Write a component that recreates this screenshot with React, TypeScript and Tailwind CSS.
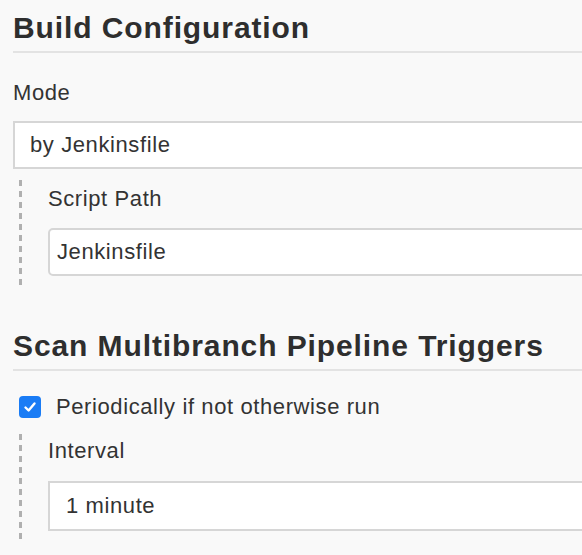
import React from 'react';

const dashBg =
  'bg-[repeating-linear-gradient(to_bottom,#b0b0b0_0px,#b0b0b0_6px,transparent_6px,transparent_11px)]';

const SectionTitle: React.FC<{ children: React.ReactNode }> = ({ children }) => (
  <h2 className="text-[30px] leading-[34px] font-bold tracking-[0.9px] text-[#2e2e2e] pb-[6px] border-b-2 border-[#e3e3e3]">
    {children}
  </h2>
);

const Label: React.FC<{ children: React.ReactNode }> = ({ children }) => (
  <div className="text-[22px] leading-[24px] tracking-[0.6px] text-[#333]">{children}</div>
);

// fake select / text box, runs past the right edge of the window
const Field: React.FC<{ value: string; rounded?: boolean; pad?: string; h?: string }> = ({
  value,
  rounded,
  pad = 'pl-[15px]',
  h = 'h-[48px]',
}) => (
  <div
    className={`${h} ${pad} -mr-[20px] flex items-center bg-white border-2 border-[#d6d6d6] text-[22px] leading-[24px] tracking-[0.6px] text-[#333] ${
      rounded ? 'rounded-[5px]' : ''
    }`}
  >
    {value}
  </div>
);

const Nested: React.FC<{ children: React.ReactNode; className?: string }> = ({ children, className }) => (
  <div className={`flex ${className ?? ''}`}>
    <div className={`ml-[6px] w-[3px] shrink-0 ${dashBg}`} />
    <div className="ml-[26px] flex-1 min-w-0 pb-[10px]">{children}</div>
  </div>
);

export default function App() {
  return (
    <div
      className="w-[582px] h-[555px] overflow-hidden bg-[#f9f9f9] pl-[13px] pt-[11px]"
      style={{ fontFamily: '"Liberation Sans", Arial, sans-serif' }}
    >
      {/* Build Configuration */}
      <SectionTitle>Build Configuration</SectionTitle>

      <div className="mt-[28px]">
        <Label>Mode</Label>
      </div>
      <div className="mt-[16px]">
        <Field value="by Jenkinsfile" />
      </div>

      <Nested className="mt-[11px]">
        <div className="pt-[7px]">
          <Label>Script Path</Label>
        </div>
        <div className="mt-[17px]">
          <Field value="Jenkinsfile" rounded pad="pl-[7px]" />
        </div>
      </Nested>

      {/* Triggers */}
      <div className="mt-[43px]">
        <SectionTitle>Scan Multibranch Pipeline Triggers</SectionTitle>
      </div>

      <div className="mt-[24px] flex items-center">
        <div className="ml-[6px] w-[22px] h-[22px] rounded-[4px] bg-[#1a7cf5] flex items-center justify-center">
          <svg width="14" height="14" viewBox="0 0 14 14" fill="none">
            <path d="M2.5 7.5 L5.6 10.5 L11.5 3.5" stroke="white" strokeWidth="2.4" strokeLinecap="round" strokeLinejoin="round" />
          </svg>
        </div>
        <div className="ml-[15px]">
          <Label>Periodically if not otherwise run</Label>
        </div>
      </div>

      <Nested className="mt-[15px]">
        <div className="pt-[5px]">
          <Label>Interval</Label>
        </div>
        <div className="mt-[18px]">
          <Field value="1 minute" pad="pl-[16px]" h="h-[50px]" />
        </div>
      </Nested>
    </div>
  );
}
